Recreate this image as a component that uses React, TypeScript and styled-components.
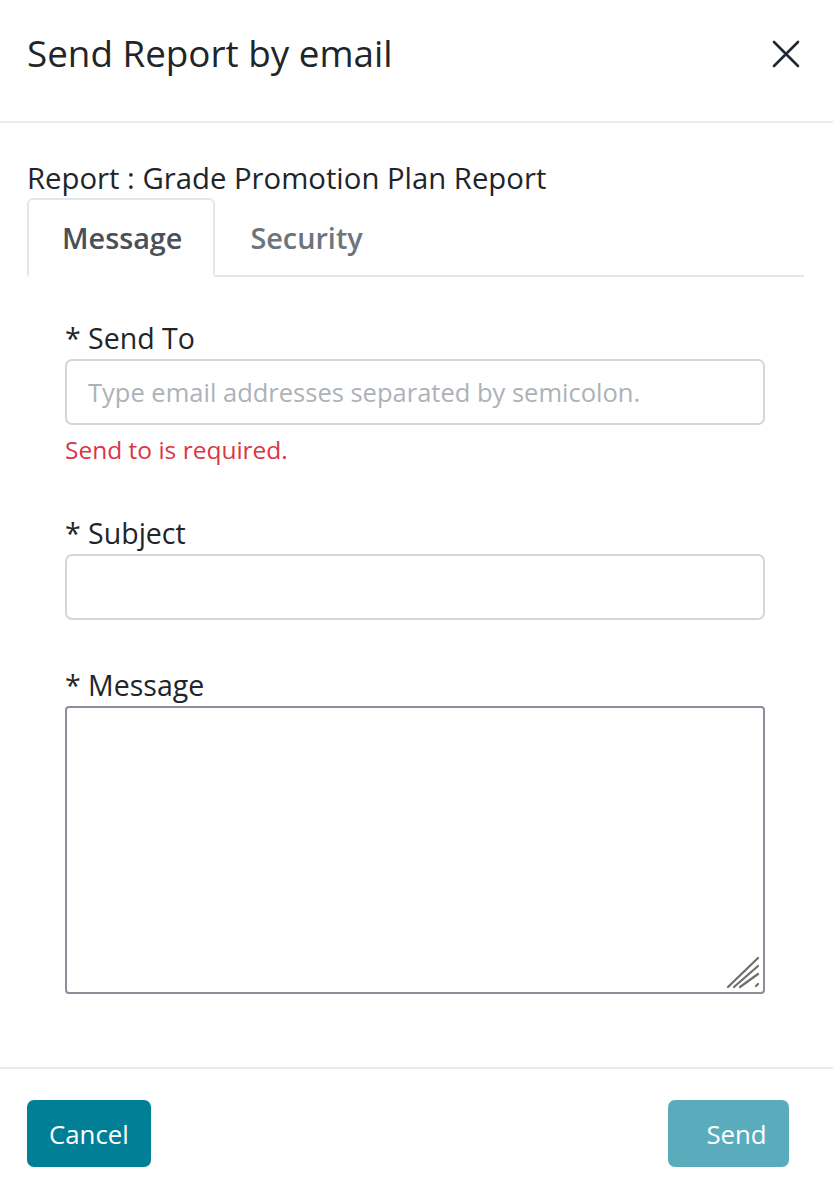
import React from "react";
import styled, { createGlobalStyle } from "styled-components";

const GlobalStyle = createGlobalStyle`
  html, body {
    margin: 0;
    padding: 0;
    background: #ffffff;
  }
  body {
    font-family: "Open Sans", "Noto Sans", sans-serif;
    color: #212529;
  }
  * {
    box-sizing: border-box;
  }
`

const Modal = styled.div`
  width: 833px;
  height: 1192px;
  display: flex;
  flex-direction: column;
  background: #ffffff;
`

const Header = styled.div`
  height: 123px;
  display: flex;
  align-items: center;
  justify-content: space-between;
  padding: 0 27px 14px 27px;
  border-bottom: 2px solid #e9ecef;
`

const Title = styled.h5`
  margin: 0;
  font-size: 36.8px;
  font-weight: 400;
  line-height: 1.2;
  color: #212529;
`

const CloseButton = styled.button`
  border: none;
  background: none;
  padding: 0;
  margin-right: 4px;
  width: 32px;
  height: 32px;
  display: flex;
  align-items: center;
  justify-content: center;
  cursor: pointer;
`

const Body = styled.div`
  flex: 1;
  padding: 35px 29px 0 27px;
`

const ReportName = styled.div`
  font-size: 29.3px;
  line-height: 40px;
  color: #212529;
`

const TabList = styled.div`
  display: flex;
  border-bottom: 2px solid #e3e6ea;
  height: 79px;
`

interface ITab {
  active?: boolean;
}
const Tab = styled.div<ITab>`
  height: 79px;
  margin-bottom: -2px;
  padding: 0 31px 0 33px;
  display: flex;
  align-items: center;
  font-size: 28.8px;
  font-weight: 600;
  color: ${(props) => (props.active ? "#495057" : "#6c757d")};
  border: 2px solid ${(props) => (props.active ? "#e3e6ea" : "transparent")};
  border-bottom-color: ${(props) => (props.active ? "#ffffff" : "transparent")};
  border-radius: 6px 6px 0 0;
  background: ${(props) => (props.active ? "#ffffff" : "transparent")};
`

const TabPane = styled.div`
  padding: 43px 39px 0 38px;
  display: flex;
  flex-direction: column;
`

interface IField {
  spacing?: number;
}
const Field = styled.div<IField>`
  display: flex;
  flex-direction: column;
  margin-top: ${(props) => props.spacing ?? 0}px;
`

const Label = styled.label`
  font-size: 28.5px;
  line-height: 36px;
  margin-bottom: 3px;
  color: #212529;
`

const Input = styled.input`
  width: 100%;
  height: 66px;
  padding: 0 21px;
  font-family: "Open Sans", "Noto Sans", sans-serif;
  font-size: 25.5px;
  color: #212529;
  border: 2px solid #d3d6da;
  border-radius: 7px;
  outline: none;
  &::placeholder {
    color: #adb2b8;
  }
`

const ErrorText = styled.div`
  margin-top: 8px;
  font-size: 24.5px;
  line-height: 34px;
  color: #dc3545;
`

const MessageBox = styled.div`
  position: relative;
  width: 100%;
  height: 288px;
`

const TextArea = styled.textarea`
  width: 100%;
  height: 100%;
  padding: 10px 20px;
  font-family: "Open Sans", "Noto Sans", sans-serif;
  font-size: 25.5px;
  border: 2px solid #8f8d99;
  border-radius: 4px;
  outline: none;
  resize: none;
  display: block;
`

const ResizeGrip = styled.svg`
  position: absolute;
  right: 5px;
  bottom: 5px;
  width: 34px;
  height: 34px;
  pointer-events: none;
`

const Footer = styled.div`
  border-top: 2px solid #e9ecef;
  height: 125px;
  padding: 31px 44px 0 27px;
  display: flex;
  justify-content: space-between;
  align-items: flex-start;
`

interface IButton {
  bg: string;
}
const Button = styled.button<IButton>`
  height: 67px;
  padding: 0 22px;
  border: none;
  border-radius: 7px;
  background: ${(props) => props.bg};
  color: #ffffff;
  font-family: "Open Sans", "Noto Sans", sans-serif;
  font-size: 25.8px;
  cursor: pointer;
`

const SendButton = styled(Button)`
  width: 121px;
  padding: 0 22px 0 38px;
  white-space: nowrap;
`

export default function App() {
  return (
    <>
      <GlobalStyle />
      <Modal>
        <Header>
          <Title>Send Report by email</Title>
          <CloseButton aria-label="Close">
            <svg width="28" height="28" viewBox="0 0 28 28">
              <path d="M2 2 L26 26 M26 2 L2 26" stroke="#1e2733" strokeWidth="2.6" strokeLinecap="round" />
            </svg>
          </CloseButton>
        </Header>
        <Body>
          <ReportName>Report : Grade Promotion Plan Report</ReportName>
          <TabList>
            <Tab active>Message</Tab>
            <Tab>Security</Tab>
          </TabList>
          <TabPane>
            <Field>
              <Label>* Send To</Label>
              <Input placeholder="Type email addresses separated by semicolon." />
              <ErrorText>Send to is required.</ErrorText>
            </Field>
            <Field spacing={48}>
              <Label>* Subject</Label>
              <Input />
            </Field>
            <Field spacing={47}>
              <Label>* Message</Label>
              <MessageBox>
                <TextArea />
                <ResizeGrip viewBox="0 0 34 34">
                  <g stroke="#6e6e6e" strokeWidth="2.2" strokeLinecap="round">
                    <path d="M2 32 L32 3" />
                    <path d="M8 32 L32 11" />
                    <path d="M14 32 L32 19" />
                    <path d="M30 31 L32 29" />
                  </g>
                </ResizeGrip>
              </MessageBox>
            </Field>
          </TabPane>
        </Body>
        <Footer>
          <Button bg="#017f96">Cancel</Button>
          <SendButton bg="#5aacbc">Send</SendButton>
        </Footer>
      </Modal>
    </>
  );
}
